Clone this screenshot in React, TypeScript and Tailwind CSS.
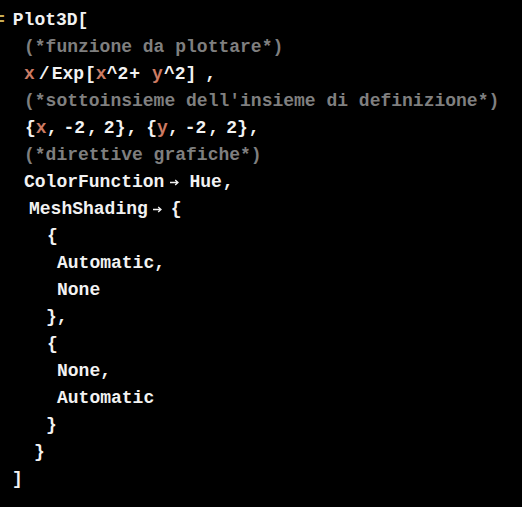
import React from 'react';

const VAR = 'text-[#cc7b63]';
const COMMENT = 'text-[#7f7f7f]';

const Var = ({ children, className = '' }: { children: React.ReactNode; className?: string }) => (
  <span className={`inline-block ${VAR} ${className}`}>{children}</span>
);

const Tok = ({ children, className = '' }: { children: React.ReactNode; className?: string }) => (
  <span className={`inline-block ${className}`}>{children}</span>
);

const Arrow = ({ className = '' }: { className?: string }) => (
  <svg
    width="9"
    height="7"
    viewBox="0 0 9 7"
    className={`inline-block align-middle ${className}`}
    fill="none"
    stroke="#f2f2f2"
    strokeWidth="1.3"
  >
    <path d="M0 3.5H8M5.2 1L8 3.5L5.2 6" />
  </svg>
);

const Line = ({ children, className = '' }: { children: React.ReactNode; className?: string }) => (
  <div className={`h-[27px] leading-[27px] whitespace-pre ${className}`}>{children}</div>
);

export default function App() {
  return (
    <div className="w-[522px] h-[507px] overflow-hidden bg-black pt-[7px] text-[18px] font-bold text-[#f2f2f2] font-['Liberation_Mono','Courier_New',monospace]">
      <Line>
        <Tok className="ml-[-6px] text-[#c9ad55]">=</Tok>
        <Tok className="ml-[8px]">Plot3D[</Tok>
      </Line>

      <Line className={`pl-[24px] ${COMMENT}`}>(*funzione da plottare*)</Line>

      <Line className="pl-[24px]">
        <Var>x</Var>
        <Tok className="ml-[4px]">/</Tok>
        <Tok className="ml-[2px]">Exp</Tok>
        <Tok className="ml-[1px]">[</Tok>
        <Var>x</Var>
        <Tok>^</Tok>
        <Tok>2</Tok>
        <Tok className="ml-[1px]">+</Tok>
        <Var className="ml-[12px]">y</Var>
        <Tok className="ml-[1px]">^</Tok>
        <Tok>2</Tok>
        <Tok>]</Tok>
        <Tok className="ml-[9px]">,</Tok>
      </Line>

      <Line className={`pl-[24px] ${COMMENT}`}>(*sottoinsieme dell'insieme di definizione*)</Line>

      <Line className="pl-[25px]">
        <Tok>{'{'}</Tok>
        <Var>x</Var>
        <Tok>,</Tok>
        <Tok className="ml-[6px]">-2</Tok>
        <Tok className="ml-[2px]">,</Tok>
        <Tok className="ml-[6px]">2{'}'}</Tok>
        <Tok className="ml-[1px]">,</Tok>
        <Tok className="ml-[9px]">{'{'}</Tok>
        <Var>y</Var>
        <Tok>,</Tok>
        <Tok className="ml-[6px]">-2</Tok>
        <Tok className="ml-[2px]">,</Tok>
        <Tok className="ml-[7px]">2{'}'}</Tok>
        <Tok className="ml-[1px]">,</Tok>
      </Line>

      <Line className={`pl-[24px] ${COMMENT}`}>(*direttive grafiche*)</Line>

      <Line className="pl-[24px]">
        <Tok>ColorFunction</Tok>
        <Arrow className="ml-[6px]" />
        <Tok className="ml-[10px]">Hue</Tok>
        <Tok className="ml-[1px]">,</Tok>
      </Line>

      <Line className="pl-[29px]">
        <Tok>MeshShading</Tok>
        <Arrow className="ml-[5px]" />
        <Tok className="ml-[9px]">{'{'}</Tok>
      </Line>

      <Line className="pl-[47px]">{'{'}</Line>
      <Line className="pl-[57px]">Automatic,</Line>
      <Line className="pl-[57px]">None</Line>
      <Line className="pl-[46px]">{'},'}</Line>
      <Line className="pl-[47px]">{'{'}</Line>
      <Line className="pl-[57px]">None,</Line>
      <Line className="pl-[57px]">Automatic</Line>
      <Line className="pl-[46px]">{'}'}</Line>
      <Line className="pl-[34px]">{'}'}</Line>
      <Line className="pl-[12px]">]</Line>
    </div>
  );
}
